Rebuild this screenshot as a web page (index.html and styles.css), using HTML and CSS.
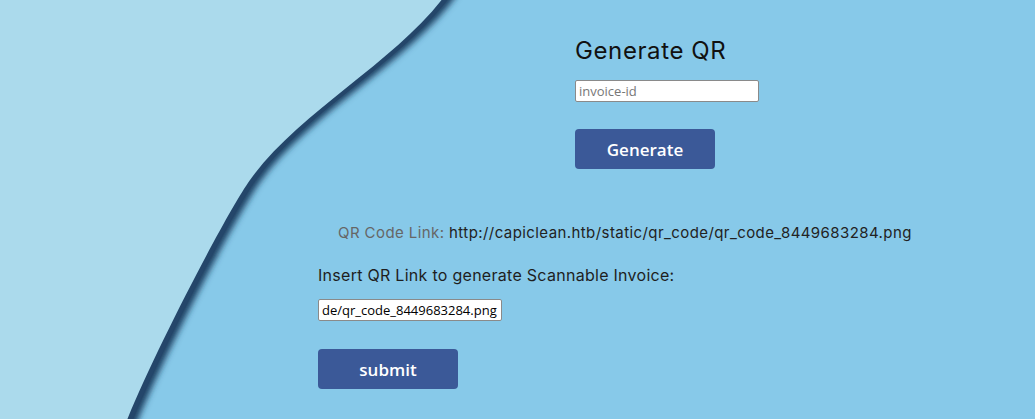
FILE: index.html
```html
<!DOCTYPE html>
<html>
<head>
<meta charset="utf-8">
<link rel="stylesheet" href="styles.css">
</head>
<body>
<svg class="wave" width="1035" height="419" viewBox="0 0 1035 419" xmlns="http://www.w3.org/2000/svg">
  <defs>
    <filter id="blur" x="-20%" y="-20%" width="140%" height="140%">
      <feGaussianBlur stdDeviation="3"/>
    </filter>
    <path id="shape" d="M0 -10 L449 -10 C 400 60, 300 110, 250 180 C 227.5 211.5, 155 350, 125 425 L0 430 Z"/>
  </defs>
  <rect width="1035" height="419" fill="#87c9e9"/>
  <use href="#shape" fill="#1f3f62" filter="url(#blur)" transform="translate(10,2)"/>
  <use href="#shape" fill="#24466a" transform="translate(5,1)"/>
  <use href="#shape" fill="#abdaec"/>
</svg>
<main class="page">
  <section class="gen">
    <h1 class="title">Generate QR</h1>
    <input class="field" type="text" placeholder="invoice-id">
    <button class="btn">Generate</button>
  </section>
  <p class="link"><span class="label">QR Code Link:</span> http://capiclean.htb/static/qr_code/qr_code_8449683284.png</p>
  <section class="insert">
    <p class="prompt">Insert QR Link to generate Scannable Invoice:</p>
    <input class="field" type="text" value="de/qr_code_8449683284.png">
    <button class="btn">submit</button>
  </section>
</main>
</body>
</html>
```
FILE: styles.css
```css
html, body {
  margin: 0;
  padding: 0;
  width: 1035px;
  height: 419px;
  overflow: hidden;
  background: #87c9e9;
  font-family: "Inter", "Noto Sans", sans-serif;
  color: #1e1e1e;
}
.wave {
  position: absolute;
  left: 0;
  top: 0;
  z-index: 0;
}
.page {
  position: relative;
  z-index: 1;
  display: flex;
  flex-direction: column;
}
.gen {
  display: flex;
  flex-direction: column;
  align-items: flex-start;
  margin-left: 575px;
  padding-top: 36px;
}
.title {
  margin: 0;
  font-size: 24px;
  font-weight: 400;
  line-height: 30px;
  letter-spacing: 0.6px;
  color: #111;
}
.field {
  box-sizing: border-box;
  width: 184px;
  height: 22px;
  margin: 0;
  padding: 1px 3px;
  border: 1px solid #8a8a8a;
  border-radius: 2px;
  background: #fff;
  font-family: "Open Sans", "Noto Sans", sans-serif;
  font-size: 13px;
  color: #000;
}
.gen .field {
  margin-top: 14px;
}
.field::placeholder {
  color: #777;
}
.btn {
  width: 140px;
  height: 40px;
  margin: 27px 0 0 0;
  border: none;
  border-radius: 4px;
  background: #3b5998;
  color: #fff;
  font-family: "Open Sans", "Noto Sans", sans-serif;
  font-weight: 600;
  font-size: 17px;
  padding: 0;
}
.link {
  margin: 53px 0 0 338px;
  font-size: 15px;
  line-height: 22px;
  letter-spacing: 0.42px;
  color: #222;
}
.label {
  color: #666;
}
.insert {
  display: flex;
  flex-direction: column;
  align-items: flex-start;
  margin-left: 318px;
}
.prompt {
  margin: 20px 0 0 0;
  font-size: 16px;
  line-height: 22px;
  letter-spacing: 0.28px;
  color: #1e1e1e;
}
.insert .field {
  margin-top: 13px;
  width: 184px;
}
.insert .btn {
  margin-top: 28px;
}
```
